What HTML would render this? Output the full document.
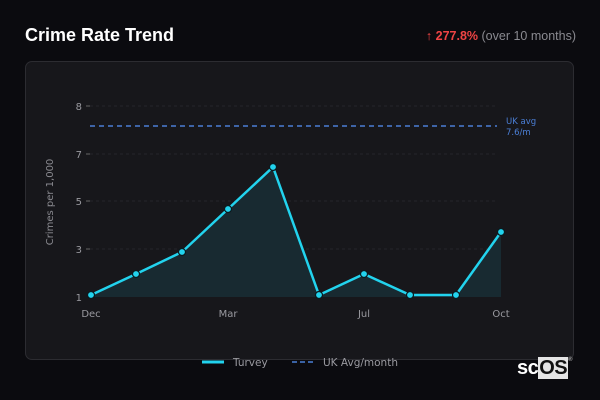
<!DOCTYPE html>
<html><head><meta charset="utf-8"><style>
html,body{margin:0;padding:0}
body{width:600px;height:400px;background:#0b0b0f;font-family:"Liberation Sans","DejaVu Sans",sans-serif;position:relative;overflow:hidden}
.t{position:absolute;left:25px;top:25px;font-family:"Liberation Sans",sans-serif;font-weight:bold;font-size:18px;color:#fff}
.r{position:absolute;right:24px;top:29px;font-size:12.5px;color:#8a8a90;font-family:"Liberation Sans",sans-serif}
.r b{color:#ef4444}
.card{position:absolute;left:25px;top:61px;width:549px;height:299px;background:#17171b;border:1px solid #2c2c31;border-radius:7px;box-sizing:border-box}
svg{position:absolute;left:0;top:0}
.logo{position:absolute;left:517px;top:357px;font-size:20px;color:#fff;font-family:"Liberation Sans",sans-serif;font-weight:bold;letter-spacing:-0.5px}
.logo span{background:#e5e5e5;color:#111;padding:0 1px}
.logo sup{font-size:6px;color:#aaa;vertical-align:top}
</style></head><body>
<div class="t">Crime Rate Trend</div>
<div class="r"><b>↑ 277.8%</b> (over 10 months)</div>
<div class="card"></div>
<svg width="600" height="400" font-family="DejaVu Sans, sans-serif">
<g stroke="#26262b" stroke-dasharray="3,3" stroke-width="1">
<line x1="90" y1="106" x2="497" y2="106"/><line x1="90" y1="154" x2="497" y2="154"/><line x1="90" y1="201" x2="497" y2="201"/><line x1="90" y1="249" x2="497" y2="249"/>
</g>
<g stroke="#666" stroke-width="1"><line x1="86" y1="106" x2="90" y2="106"/><line x1="86" y1="154" x2="90" y2="154"/><line x1="86" y1="201" x2="90" y2="201"/><line x1="86" y1="249" x2="90" y2="249"/></g>
<g fill="#9a9aa0" font-size="10" text-anchor="end"><text x="82" y="110">8</text><text x="82" y="158">7</text><text x="82" y="205">5</text><text x="82" y="253">3</text><text x="82" y="301">1</text></g>
<text transform="translate(53,202) rotate(-90)" fill="#8a8a90" font-size="10" text-anchor="middle">Crimes per 1,000</text>
<g fill="#9a9aa0" font-size="10" text-anchor="middle"><text x="91" y="317">Dec</text><text x="228" y="317">Mar</text><text x="364" y="317">Jul</text><text x="501" y="317">Oct</text></g>
<line x1="90" y1="126" x2="497" y2="126" stroke="#4b7fd6" stroke-width="1.5" stroke-dasharray="5,4"/>
<text x="506" y="124" fill="#4b7fd6" font-size="8.5">UK avg</text><text x="506" y="135" fill="#4b7fd6" font-size="8.5">7.6/m</text>
<polygon points="91,295 136,274 182,252 228,209 273,167 319,295 364,274 410,295 456,295 501,232 501,297 91,297" fill="#182a31"/>
<polyline points="91,295 136,274 182,252 228,209 273,167 319,295 364,274 410,295 456,295 501,232" fill="none" stroke="#22d3ee" stroke-width="2.5" stroke-linejoin="round"/>
<g fill="#22d3ee" stroke="#0b1a1f" stroke-width="1.2">
<circle cx="91" cy="295" r="3.5"/><circle cx="136" cy="274" r="3.5"/><circle cx="182" cy="252" r="3.5"/><circle cx="228" cy="209" r="3.5"/><circle cx="273" cy="167" r="3.5"/><circle cx="319" cy="295" r="3.5"/><circle cx="364" cy="274" r="3.5"/><circle cx="410" cy="295" r="3.5"/><circle cx="456" cy="295" r="3.5"/><circle cx="501" cy="232" r="3.5"/>
</g>
<line x1="202" y1="362" x2="224" y2="362" stroke="#22d3ee" stroke-width="3"/>
<text x="233" y="366" fill="#9a9aa0" font-size="10.5">Turvey</text>
<line x1="292" y1="362" x2="314" y2="362" stroke="#4b7fd6" stroke-width="1.5" stroke-dasharray="5,3"/>
<text x="323" y="366" fill="#9a9aa0" font-size="10.5">UK Avg/month</text>
</svg>
<div class="logo">sc<span>OS</span><sup>®</sup></div>
</body></html>
